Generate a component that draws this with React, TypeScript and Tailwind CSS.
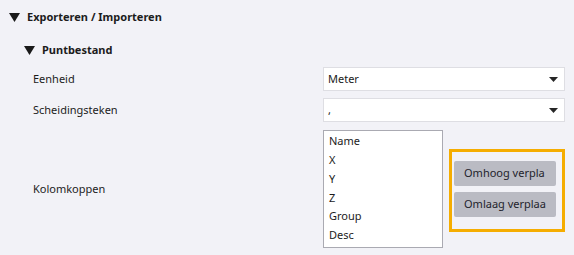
import React from "react";

const Tri = () => (
  <svg width="11" height="9" viewBox="0 0 11 9" className="shrink-0">
    <path d="M0 0 L11 0 L5.5 9 Z" fill="#1a1a1a" />
  </svg>
);

const SmallTri = () => (
  <svg width="9" height="5" viewBox="0 0 9 5" className="shrink-0">
    <path d="M0 0 L9 0 L4.5 5 Z" fill="#262626" />
  </svg>
);

const Select = ({ value }: { value: string }) => (
  <div className="w-[242px] h-[24px] bg-white border border-[#dedee3] flex items-center justify-between pl-[4px] pr-[6px]">
    <span className="text-[#1a1a1a]">{value}</span>
    <SmallTri />
  </div>
);

const Btn = ({ label }: { label: string }) => (
  <div className="w-[102px] h-[25px] bg-[#babbc3] rounded-[2px] pl-[10px] flex items-center text-[#23232b] whitespace-nowrap overflow-hidden">
    {label}
  </div>
);

export default function App() {
  const items = ["Name", "X", "Y", "Z", "Group", "Desc"];
  return (
    <div className="w-[574px] h-[255px] bg-[#f2f2f7] text-[#1c1c1c] text-[11px] font-['Noto_Sans',sans-serif] overflow-hidden pt-[7px]">
      <div className="flex items-center h-[21px] pl-[9px] gap-[7px]">
        <Tri />
        <span className="font-bold">Exporteren / Importeren</span>
      </div>
      <div className="flex items-center h-[20px] mt-[12px] pl-[24px] gap-[7px]">
        <Tri />
        <span className="font-bold">Puntbestand</span>
      </div>
      <div className="flex items-center mt-[7px] pl-[33px]">
        <span className="w-[290px]">Eenheid</span>
        <Select value="Meter" />
      </div>
      <div className="flex items-center mt-[7px] pl-[33px]">
        <span className="w-[290px]">Scheidingsteken</span>
        <Select value="," />
      </div>
      <div className="flex items-center mt-[8px] pl-[33px]">
        <span className="w-[290px]">Kolomkoppen</span>
        <div className="w-[120px] h-[118px] bg-white border border-[#aaaab2] pl-[5px] pt-px">
          {items.map((it) => (
            <div key={it} className="h-[18.8px] flex items-center">
              {it}
            </div>
          ))}
        </div>
        <div className="self-start mt-[19px] ml-[6px] w-[116px] h-[83px] border-[3px] border-[#f5ad00] pl-[2px] pt-[9px] flex flex-col gap-[6px]">
          <Btn label="Omhoog verpla" />
          <Btn label="Omlaag verplaa" />
        </div>
      </div>
    </div>
  );
}
